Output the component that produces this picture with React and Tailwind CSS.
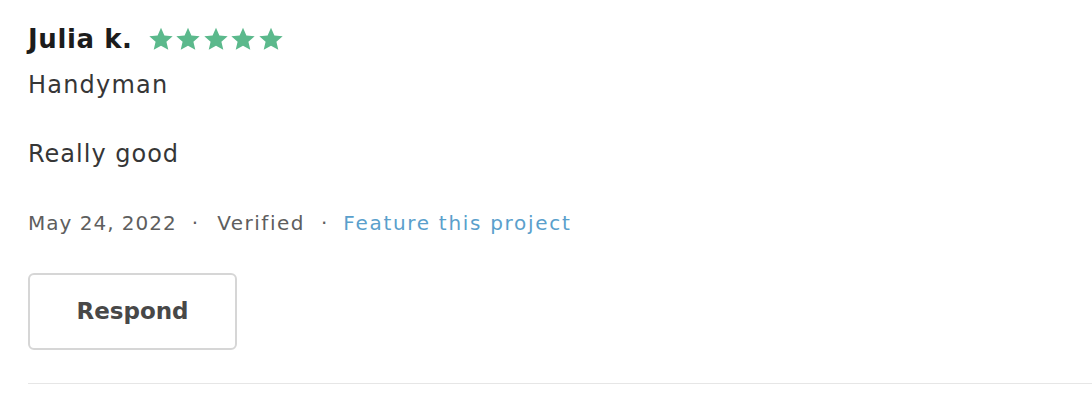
import React from "react";

const Star = () => (
  <svg width="26" height="25" viewBox="0 0 24 24" className="shrink-0">
    <path
      d="M12 0.8l3.25 7.3 7.95.75-6 5.3 1.8 7.8L12 17.9l-7 4.05 1.8-7.8-6-5.3 7.95-.75z"
      fill="#5bb98c"
    />
  </svg>
);

export default function App() {
  return (
    <div
      className="w-[1092px] h-[410px] bg-white pl-[28px] pt-[21px]"
      style={{ fontFamily: "'DejaVu Sans', Verdana, sans-serif" }}
    >
      <div className="flex items-center gap-[15px]">
        <span className="text-[26px] leading-[36px] font-bold text-[#1c1c1c] tracking-[0.6px]">Julia k.</span>
        <div className="flex gap-[1.5px]">
          <Star />
          <Star />
          <Star />
          <Star />
          <Star />
        </div>
      </div>
      <div className="mt-[12px] text-[24px] leading-[32px] text-[#363636] tracking-[1.2px]">Handyman</div>
      <div className="mt-[37px] text-[24px] leading-[32px] text-[#363636] tracking-[1px]">Really good</div>
      <div className="mt-[39px] flex items-center text-[20px] leading-[28px] text-[#5e5e5e] tracking-[1px]">
        <span>May 24, 2022</span>
        <span className="ml-[15px] mr-[18px]">·</span>
        <span className="tracking-[1.5px]">Verified</span>
        <span className="ml-[16px] mr-[15px]">·</span>
        <span className="text-[#5a9fcc] tracking-[1.7px]">Feature this project</span>
      </div>
      <button className="mt-[36px] w-[209px] h-[77px] rounded-[6px] border-2 border-[#d6d6d6] bg-white text-[23px] font-bold text-[#484848] flex items-center justify-center">
        Respond
      </button>
      <div className="mt-[33px] h-px bg-[#e6e6e6]" />
    </div>
  );
}
